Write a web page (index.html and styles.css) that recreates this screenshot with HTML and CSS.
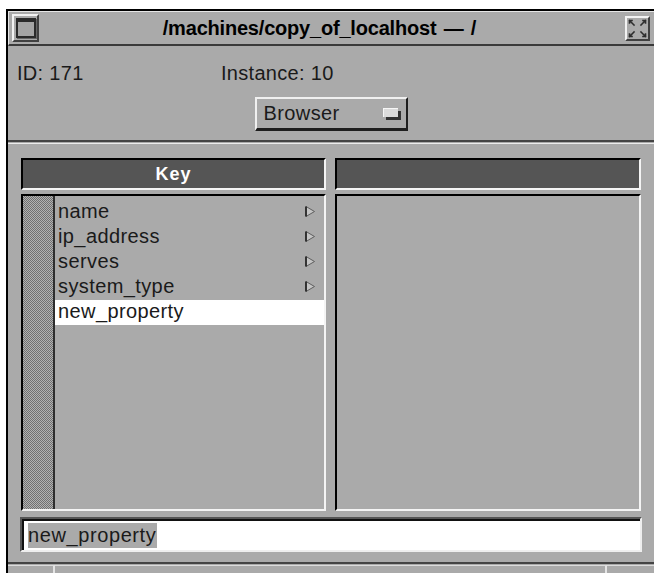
FILE: index.html
```html
<!DOCTYPE html>
<html lang="en">
<head>
<meta charset="utf-8">
<title>/machines/copy_of_localhost</title>
<link rel="stylesheet" href="styles.css">
</head>
<body>
<div class="window">
  <div class="titlebar">
    <div class="win-btn menu-btn"><span class="menu-glyph"></span></div>
    <div class="title">/machines/copy_of_localhost — /</div>
    <div class="win-btn max-btn">
      <svg width="21" height="21" viewBox="0 0 21 21">
        <g stroke="#2e2e2e" stroke-width="1.6" fill="none" stroke-linecap="square">
          <path d="M2.5 2.5 L7 7 M2.5 5 V2.5 H5"/>
          <path d="M18.5 2.5 L14 7 M18.5 5 V2.5 H16"/>
          <path d="M2.5 18.5 L7 14 M2.5 16 V18.5 H5"/>
          <path d="M18.5 18.5 L14 14 M18.5 16 V18.5 H16"/>
        </g>
      </svg>
    </div>
  </div>

  <div class="content">
    <div class="info">
      <span class="info-id">ID: 171</span>
      <span class="info-instance">Instance: 10</span>
    </div>

    <div class="mode-row">
      <div class="option-btn">
        <span>Browser</span>
        <span class="option-indicator"></span>
      </div>
    </div>

    <div class="separator"></div>

    <div class="panels">
      <div class="sunken col-header">Key</div>
      <div class="sunken col-header"></div>

      <div class="sunken list">
        <div class="gutter"></div>
        <div class="rows">
          <div class="row"><span>name</span><svg class="arrow" width="10" height="11" viewBox="0 0 10 11"><polygon points="1,0.5 9.5,5.5 1,10.5" fill="#c4c4c4" stroke="#5e5e5e" stroke-width="1"/><line x1="1" y1="0.5" x2="1" y2="10.5" stroke="#2a2a2a" stroke-width="1.8"/></svg></div>
          <div class="row"><span>ip_address</span><svg class="arrow" width="10" height="11" viewBox="0 0 10 11"><polygon points="1,0.5 9.5,5.5 1,10.5" fill="#c4c4c4" stroke="#5e5e5e" stroke-width="1"/><line x1="1" y1="0.5" x2="1" y2="10.5" stroke="#2a2a2a" stroke-width="1.8"/></svg></div>
          <div class="row"><span>serves</span><svg class="arrow" width="10" height="11" viewBox="0 0 10 11"><polygon points="1,0.5 9.5,5.5 1,10.5" fill="#c4c4c4" stroke="#5e5e5e" stroke-width="1"/><line x1="1" y1="0.5" x2="1" y2="10.5" stroke="#2a2a2a" stroke-width="1.8"/></svg></div>
          <div class="row"><span>system_type</span><svg class="arrow" width="10" height="11" viewBox="0 0 10 11"><polygon points="1,0.5 9.5,5.5 1,10.5" fill="#c4c4c4" stroke="#5e5e5e" stroke-width="1"/><line x1="1" y1="0.5" x2="1" y2="10.5" stroke="#2a2a2a" stroke-width="1.8"/></svg></div>
          <div class="row row-selected"><span>new_property</span></div>
        </div>
      </div>
      <div class="sunken list"></div>
    </div>

    <div class="entry-row">
      <div class="entry"><span class="entry-sel">new_property</span></div>
    </div>

    <div class="status">
      <div class="status-cell status-left"></div>
      <div class="status-cell status-main"></div>
      <div class="status-cell status-right"></div>
    </div>
  </div>
</div>
</body>
</html>
```

FILE: styles.css
```css
html, body {
  margin: 0;
  background: #ffffff;
  overflow: hidden;
}

body {
  font-family: "Liberation Sans", Arial, sans-serif;
  color: #1a1a1a;
}

/* window frame */
.window {
  margin: 9px 0 0 6px;
  width: 648px;
  height: 564px;
  box-sizing: border-box;
  border-top: 2px solid #000;
  border-left: 2px solid #000;
  background: #aaaaaa;
  display: flex;
  flex-direction: column;
}

/* title bar */
.titlebar {
  height: 32px;
  border-top: 1px solid #e6e6e6;
  border-left: 1px solid #e6e6e6;
  border-bottom: 2px solid #3a3a3a;
  display: flex;
  align-items: center;
  padding: 0 4px 0 3px;
}

.win-btn {
  box-sizing: border-box;
  border: 2px solid;
  border-color: #f2f2f2 #404040 #404040 #f2f2f2;
  background: #aaaaaa;
  display: flex;
  align-items: center;
  justify-content: center;
}

.menu-btn {
  width: 27px;
  height: 28px;
}

.menu-glyph {
  width: 20px;
  height: 20px;
  box-sizing: border-box;
  border: 2px solid #2a2a2a;
  border-top-width: 4px;
  background: #a4a4a4;
  box-shadow: 1px 1px 0 #666;
}

.max-btn {
  width: 25px;
  height: 25px;
}

.title {
  flex: 1;
  text-align: center;
  font-weight: bold;
  font-size: 20px;
  line-height: 24px;
  letter-spacing: -0.2px;
  word-spacing: 2px;
  color: #000;
  padding-right: 25px;
}

/* window body */
.content {
  flex: 1;
  display: flex;
  flex-direction: column;
}

.info {
  display: flex;
  padding: 16px 0 0 9px;
  font-size: 20px;
  line-height: 23px;
  letter-spacing: 0.3px;
}

.info-id {
  width: 204px;
}

.mode-row {
  display: flex;
  justify-content: center;
  margin-top: 12px;
}

.option-btn {
  width: 153px;
  height: 34px;
  box-sizing: border-box;
  border: 2px solid;
  border-color: #f0f0f0 #1e1e1e #1e1e1e #f0f0f0;
  border-bottom-width: 3px;
  background: #aaaaaa;
  display: flex;
  align-items: center;
  justify-content: space-between;
  padding: 0 8px 0 7px;
  font-size: 20px;
  line-height: 29px;
  letter-spacing: 0.4px;
}

.option-indicator {
  width: 15px;
  height: 9px;
  box-sizing: border-box;
  background: #dcdcdc;
  border-top: 1px solid #f6f6f6;
  border-left: 1px solid #f6f6f6;
  box-shadow: 3px 3px 0 #333;
  margin-top: -3px;
}

.separator {
  margin-top: 9px;
  height: 1px;
  border-top: 2px solid #444;
  border-bottom: 1px solid #ececec;
}

/* key / value columns */
.panels {
  display: grid;
  grid-template-columns: 305px 306px;
  grid-template-rows: 32px 317px;
  column-gap: 9px;
  row-gap: 4px;
  margin-top: 14px;
  padding-left: 13px;
}

.sunken {
  box-sizing: border-box;
  border: 2px solid;
  border-color: #000 #f4f4f4 #f4f4f4 #000;
}

.col-header {
  background: #555555;
  color: #fff;
  font-weight: bold;
  font-size: 18px;
  line-height: 28px;
  letter-spacing: 1px;
  text-align: center;
}

.list {
  background: #aaaaaa;
  display: flex;
}

.gutter {
  width: 30px;
  border-right: 2px solid #2e2e2e;
  background: repeating-conic-gradient(#707070 0 25%, #b2b2b2 0 50%) 0 0 / 2px 2px;
}

.rows {
  flex: 1;
  padding-top: 4px;
}

.row {
  height: 25px;
  display: flex;
  justify-content: space-between;
  align-items: flex-start;
  padding: 0 9px 0 3px;
  font-size: 20px;
  line-height: 22px;
  letter-spacing: 0.4px;
}

.row-selected {
  background: #ffffff;
}

.arrow {
  margin-top: 6px;
  flex-shrink: 0;
}

/* text entry */
.entry-row {
  margin-top: 6px;
  padding-left: 12px;
}

.entry {
  width: 622px;
  height: 35px;
  box-sizing: border-box;
  border: 2px solid;
  border-color: #555 #eeeeee #eeeeee #555;
  box-shadow: inset 2px 2px 0 #111;
  background: #ffffff;
  padding: 4px 0 0 6px;
}

.entry-sel {
  display: inline-block;
  background: #aaaaaa;
  font-size: 20px;
  line-height: 25px;
  letter-spacing: 0.6px;
  padding-right: 1px;
}

/* status strip */
.status {
  flex: 1;
  margin-top: 10px;
  border-top: 2px solid #444;
  display: flex;
}

.status-cell {
  border-top: 1px solid #dcdcdc;
  margin-top: 1px;
}

.status-left {
  width: 45px;
  border-right: 2px solid #e4e4e4;
}

.status-main {
  flex: 1;
  border-right: 2px solid #e4e4e4;
}

.status-right {
  width: 47px;
}
```
